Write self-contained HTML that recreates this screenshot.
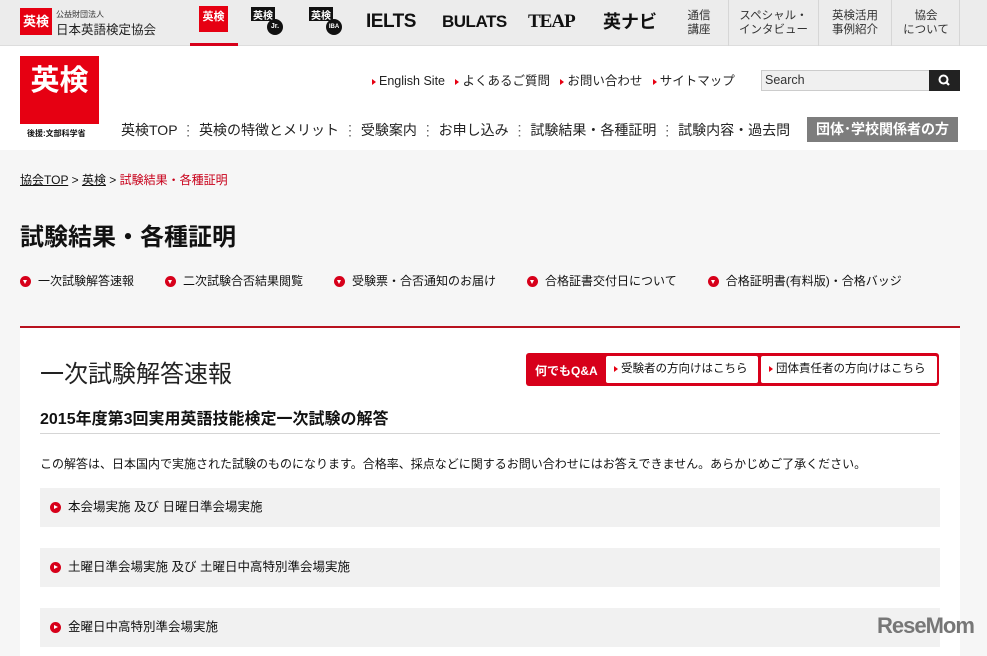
<!DOCTYPE html>
<html><head><meta charset="utf-8"><style>
*{margin:0;padding:0;box-sizing:border-box}
body{width:987px;height:649px;overflow:hidden;background:#f6f6f6;font-family:"Liberation Sans","Noto Sans CJK JP",sans-serif;color:#111;position:relative}
.a{position:absolute}
.top{left:0;top:0;width:987px;height:46px;background:#ececec;border-bottom:1px solid #ddd}
.hdr{left:0;top:46px;width:987px;height:104px;background:#fff}
.red{background:#e60012;color:#fff}
.tri{display:inline-block;width:0;height:0;border-left:4px solid #e60012;border-top:3px solid transparent;border-bottom:3px solid transparent;margin-right:3px;vertical-align:middle}
.nav{font-size:14px;top:120px;white-space:nowrap}
.sep{color:#666}
.dot{display:inline-block;width:11px;height:11px;border-radius:50%;background:#d7001a;vertical-align:middle;margin-right:7px;position:relative}
.dot:after{content:"";position:absolute;left:3px;top:4px;border-top:4px solid #fff;border-left:2.5px solid transparent;border-right:2.5px solid transparent}
.pdot:after{left:4px;top:3px;border-left:4px solid #fff;border-top:2.5px solid transparent;border-bottom:2.5px solid transparent;border-right:0}
.item{left:40px;width:900px;height:39px;background:#f1f1f1;font-size:12.5px;padding-left:10px;line-height:39px}
.tn{top:0;height:46px;border-left:1px solid #d6d6d6;font-size:11.5px;color:#333;text-align:center;line-height:14px;padding-top:9px}
</style></head><body>
<div class="a top"></div>
<div class="a red" style="left:20px;top:8px;width:32px;height:27px;font-size:13px;font-weight:bold;text-align:center;line-height:27px">英検</div>
<div class="a" style="left:56px;top:9px;font-size:8px;color:#333">公益財団法人</div>
<div class="a" style="left:56px;top:19px;font-size:12.5px;color:#222">日本英語検定協会</div>
<div class="a red" style="left:199px;top:6px;width:29px;height:26px;font-size:11px;font-weight:bold;text-align:center;line-height:22px">英検</div>
<div class="a" style="left:190px;top:43px;width:48px;height:3px;background:#d7001a"></div>
<div class="a" style="left:251px;top:7px;width:24px;height:14px;background:#111;color:#fff;font-size:10px;font-weight:bold;text-align:center">英検</div>
<div class="a" style="left:267px;top:19px;width:16px;height:16px;border-radius:50%;background:#111;color:#fff;font-size:7px;font-weight:bold;text-align:center;line-height:16px">Jr.</div>
<div class="a" style="left:309px;top:7px;width:24px;height:14px;background:#111;color:#fff;font-size:10px;font-weight:bold;text-align:center">英検</div>
<div class="a" style="left:326px;top:19px;width:16px;height:16px;border-radius:50%;background:#111;color:#fff;font-size:6px;font-weight:bold;text-align:center;line-height:16px">IBA</div>
<div class="a" style="left:366px;top:11px;font-size:19px;font-weight:900;letter-spacing:-0.5px">IELTS</div>
<div class="a" style="left:442px;top:12px;font-size:17px;font-weight:900;letter-spacing:-0.5px">BULATS</div>
<div class="a" style="left:528px;top:11px;font-size:19px;font-family:'Liberation Serif',serif;font-weight:bold;letter-spacing:-1px">TEAP</div>
<div class="a" style="left:603px;top:8px;font-size:18px;font-weight:bold">英ナビ</div>
<div class="a tn" style="left:668px;width:62px;border-left:0">通信<br>講座</div>
<div class="a tn" style="left:728px;width:90px">スペシャル・<br>インタビュー</div>
<div class="a tn" style="left:818px;width:73px">英検活用<br>事例紹介</div>
<div class="a tn" style="left:891px;width:69px">協会<br>について</div>
<div class="a" style="left:959px;top:0;height:46px;border-left:1px solid #d6d6d6"></div>
<div class="a hdr"></div>
<div class="a red" style="left:20px;top:56px;width:79px;height:68px;font-size:29px;font-weight:bold;text-align:center;line-height:50px">英検</div>
<div class="a" style="left:27px;top:128px;font-size:8px;font-weight:bold">後援:文部科学省</div>
<div class="a" style="left:372px;top:70px;font-size:12.5px;white-space:nowrap;color:#222"><span class="tri"></span>English Site &nbsp;&nbsp;<span class="tri"></span>よくあるご質問 &nbsp;&nbsp;<span class="tri"></span>お問い合わせ &nbsp;&nbsp;<span class="tri"></span>サイトマップ</div>
<div class="a" style="left:761px;top:70px;width:169px;height:21px;background:#f0f0f0;border:1px solid #ccc;font-size:12.5px;padding:2px 3px;color:#333">Search</div>
<div class="a" style="left:929px;top:70px;width:31px;height:21px;background:#222"><svg width="31" height="21"><circle cx="14.5" cy="9.5" r="4" fill="none" stroke="#fff" stroke-width="2"/><line x1="17.5" y1="12.5" x2="20" y2="15" stroke="#fff" stroke-width="2.2"/></svg></div>
<div class="a nav" style="left:121px;color:#222">英検TOP <span class="sep">⋮</span> 英検の特徴とメリット <span class="sep">⋮</span> 受験案内 <span class="sep">⋮</span> お申し込み <span class="sep">⋮</span> 試験結果・各種証明 <span class="sep">⋮</span> 試験内容・過去問</div>
<div class="a" style="left:807px;top:117px;width:151px;height:25px;background:#7d7d7d;color:#fff;font-size:14px;font-weight:bold;text-align:center;line-height:25px">団体･学校関係者の方</div>
<div class="a" style="left:20px;top:171px;font-size:12px;white-space:nowrap"><u>協会TOP</u> &gt; <u>英検</u> &gt; <span style="color:#c8001a">試験結果・各種証明</span></div>
<div class="a" style="left:20px;top:217px;font-size:24px;font-weight:bold">試験結果・各種証明</div>
<div class="a" style="left:20px;top:272px;font-size:12px;white-space:nowrap;word-spacing:0">
<span class="dot"></span>一次試験解答速報<span style="display:inline-block;width:31px"></span><span class="dot"></span>二次試験合否結果閲覧<span style="display:inline-block;width:31px"></span><span class="dot"></span>受験票・合否通知のお届け<span style="display:inline-block;width:31px"></span><span class="dot"></span>合格証書交付日について<span style="display:inline-block;width:31px"></span><span class="dot"></span>合格証明書(有料版)・合格バッジ</div>
<div class="a" style="left:20px;top:326px;width:940px;height:330px;background:#fff;border-top:2px solid #b8121f"></div>
<div class="a" style="left:40px;top:354px;font-size:24px;color:#222">一次試験解答速報</div>
<div class="a red" style="left:526px;top:353px;width:413px;height:33px;border-radius:3px;background:#d7001a"></div>
<div class="a" style="left:535px;top:362px;font-size:12px;font-weight:bold;color:#fff">何でもQ&amp;A</div>
<div class="a" style="left:606px;top:356px;width:152px;height:27px;background:#fff;border-radius:2px;font-size:11.5px;line-height:27px;padding-left:8px"><span class="tri"></span>受験者の方向けはこちら</div>
<div class="a" style="left:761px;top:356px;width:176px;height:27px;background:#fff;border-radius:2px;font-size:11.5px;line-height:27px;padding-left:8px"><span class="tri"></span>団体責任者の方向けはこちら</div>
<div class="a" style="left:40px;top:405px;font-size:16px;font-weight:bold">2015年度第3回実用英語技能検定一次試験の解答</div>
<div class="a" style="left:40px;top:433px;width:900px;border-top:1px solid #d5d5d5"></div>
<div class="a" style="left:40px;top:455px;font-size:12px;white-space:nowrap">この解答は、日本国内で実施された試験のものになります。合格率、採点などに関するお問い合わせにはお答えできません。あらかじめご了承ください。</div>
<div class="a item" style="top:488px"><span class="dot pdot"></span>本会場実施 及び 日曜日準会場実施</div>
<div class="a item" style="top:548px"><span class="dot pdot"></span>土曜日準会場実施 及び 土曜日中高特別準会場実施</div>
<div class="a item" style="top:608px"><span class="dot pdot"></span>金曜日中高特別準会場実施</div>
<div class="a" style="left:877px;top:613px;font-size:22px;font-weight:bold;color:#777;letter-spacing:-1px">ReseMom</div>
</body></html>
